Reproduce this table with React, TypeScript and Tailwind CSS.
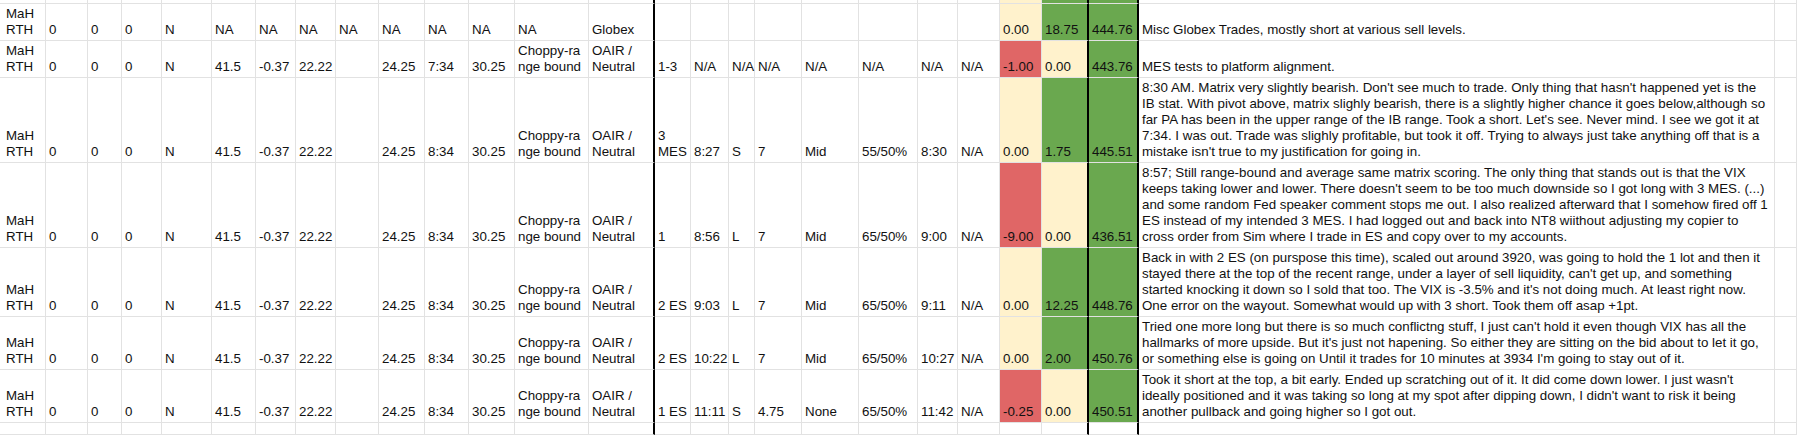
import React from "react";

type Bg = "w" | "r" | "y" | "g";
type CellDef = { v: string | string[]; bg?: Bg };

const BG: Record<Bg, string> = {
  w: "bg-white",
  r: "bg-[#e06666]",
  y: "bg-[#fff2cc]",
  g: "bg-[#6aa84f]",
};

// column index -> right border is black 2px
const BLACK_COLS = new Set([13, 23, 24]);
const NCOLS = 27;

const base = (v: string): CellDef => ({ v });

function tradeRow(
  k: string,
  o: string | string[],
  rest: string[],
  w: [string, Bg],
  x: [string, Bg],
  y: string,
  notes: string[]
): CellDef[] {
  return [
    { v: ["MaH", "RTH"] },
    base("0"),
    base("0"),
    base("0"),
    base("N"),
    base("41.5"),
    base("-0.37"),
    base("22.22"),
    base(""),
    base("24.25"),
    base(k),
    base("30.25"),
    { v: ["Choppy-ra", "nge bound"] },
    { v: ["OAIR /", "Neutral"] },
    { v: o },
    ...rest.map(base),
    { v: w[0], bg: w[1] },
    { v: x[0], bg: x[1] },
    { v: y, bg: "g" },
    { v: notes },
    base(""),
  ];
}

const emptyRow = (colored: boolean): CellDef[] =>
  Array.from({ length: NCOLS }, (_, i) => {
    if (!colored) return { v: "" };
    if (i === 22) return { v: "", bg: "y" as Bg };
    if (i === 23 || i === 24) return { v: "", bg: "g" as Bg };
    return { v: "" };
  });

const rows: CellDef[][] = [
  emptyRow(true),
  [
    { v: ["MaH", "RTH"] },
    base("0"),
    base("0"),
    base("0"),
    base("N"),
    base("NA"),
    base("NA"),
    base("NA"),
    base("NA"),
    base("NA"),
    base("NA"),
    base("NA"),
    base("NA"),
    base("Globex"),
    base(""),
    base(""),
    base(""),
    base(""),
    base(""),
    base(""),
    base(""),
    base(""),
    { v: "0.00", bg: "y" },
    { v: "18.75", bg: "g" },
    { v: "444.76", bg: "g" },
    { v: "Misc Globex Trades, mostly short at various sell levels." },
    base(""),
  ],
  tradeRow(
    "7:34",
    "1-3",
    ["N/A", "N/A", "N/A", "N/A", "N/A", "N/A", "N/A"],
    ["-1.00", "r"],
    ["0.00", "y"],
    "443.76",
    ["MES tests to platform alignment."]
  ),
  tradeRow(
    "8:34",
    ["3", "MES"],
    ["8:27", "S", "7", "Mid", "55/50%", "8:30", "N/A"],
    ["0.00", "y"],
    ["1.75", "g"],
    "445.51",
    [
      "8:30 AM. Matrix very slightly bearish. Don't see much to trade. Only thing that hasn't happened yet is the",
      "IB stat. With pivot above, matrix slighly bearish, there is a slightly higher chance it goes below,although so",
      "far PA has been in the upper range of the IB range. Took a short. Let's see. Never mind. I see we got it at",
      "7:34. I was out. Trade was slighly profitable, but took it off. Trying to always just take anything off that is a",
      "mistake isn't true to my justification for going in.",
    ]
  ),
  tradeRow(
    "8:34",
    "1",
    ["8:56", "L", "7", "Mid", "65/50%", "9:00", "N/A"],
    ["-9.00", "r"],
    ["0.00", "y"],
    "436.51",
    [
      "8:57; Still range-bound and average same matrix scoring. The only thing that stands out is that the VIX",
      "keeps taking lower and lower. There doesn't seem to be too much downside so I got long with 3 MES. (...)",
      "and some random Fed speaker comment stops me out. I also realized afterward that I somehow fired off 1",
      "ES instead of my intended 3 MES. I had logged out and back into NT8 wiithout adjusting my copier to",
      "cross order from Sim where I trade in ES and copy over to my accounts.",
    ]
  ),
  tradeRow(
    "8:34",
    "2 ES",
    ["9:03", "L", "7", "Mid", "65/50%", "9:11", "N/A"],
    ["0.00", "y"],
    ["12.25", "g"],
    "448.76",
    [
      "Back in with 2 ES (on purspose this time), scaled out around 3920, was going to hold the 1 lot and then it",
      "stayed there at the top of the recent range, under a layer of sell liquidity, can't get up, and something",
      "started knocking it down so I sold that too. The VIX is -3.5% and it's not doing much. At least right now.",
      "One error on the wayout. Somewhat would up with 3 short. Took them off asap +1pt.",
    ]
  ),
  tradeRow(
    "8:34",
    "2 ES",
    ["10:22", "L", "7", "Mid", "65/50%", "10:27", "N/A"],
    ["0.00", "y"],
    ["2.00", "g"],
    "450.76",
    [
      "Tried one more long but there is so much conflictng stuff, I just can't hold it even though VIX has all the",
      "hallmarks of more upside. But it's just not hapening. So either they are sitting on the bid about to let it go,",
      "or something else is going on Until it trades for 10 minutes at 3934 I'm going to stay out of it.",
    ]
  ),
  tradeRow(
    "8:34",
    "1 ES",
    ["11:11", "S", "4.75", "None", "65/50%", "11:42", "N/A"],
    ["-0.25", "r"],
    ["0.00", "y"],
    "450.51",
    [
      "Took it short at the top, a bit early. Ended up scratching out of it. It did come down lower. I just wasn't",
      "ideally positioned and it was taking so long at my spot after dipping down, I didn't want to risk it being",
      "another pullback and going higher so I got out.",
    ]
  ),
  emptyRow(false),
];

function Cell({ def, col }: { def: CellDef; col: number }) {
  const lines = Array.isArray(def.v) ? def.v : def.v ? [def.v] : [];
  const right = BLACK_COLS.has(col)
    ? "border-r-2 border-r-black"
    : "border-r border-r-[#e2e2e2]";
  const pad = col === 0 ? "pl-[6px]" : "pl-[3px]";
  return (
    <div
      className={`flex min-w-0 flex-col justify-end border-b border-b-[#e2e2e2] pb-[2px] ${right} ${pad} ${BG[def.bg ?? "w"]}`}
    >
      {lines.map((l, i) => (
        <div key={i} className="whitespace-nowrap leading-[16px]">
          {l}
        </div>
      ))}
    </div>
  );
}

export default function App() {
  return (
    <div className="h-[435px] w-[1797px] overflow-hidden bg-white font-['Liberation_Sans',Arial,sans-serif] text-[13.33px] text-[#111]">
      <div className="grid h-[435px] grid-cols-[46px_42px_34px_40px_50px_44px_40px_40px_43px_46px_44px_46px_74px_66px_36px_38px_26px_47px_57px_59px_40px_42px_42px_47px_50px_636px_1fr] grid-rows-[4px_37px_37px_85px_85px_69px_53px_53px_1fr]">
        {rows.map((r, ri) =>
          r.map((c, ci) => <Cell key={`${ri}-${ci}`} def={c} col={ci} />)
        )}
      </div>
    </div>
  );
}
